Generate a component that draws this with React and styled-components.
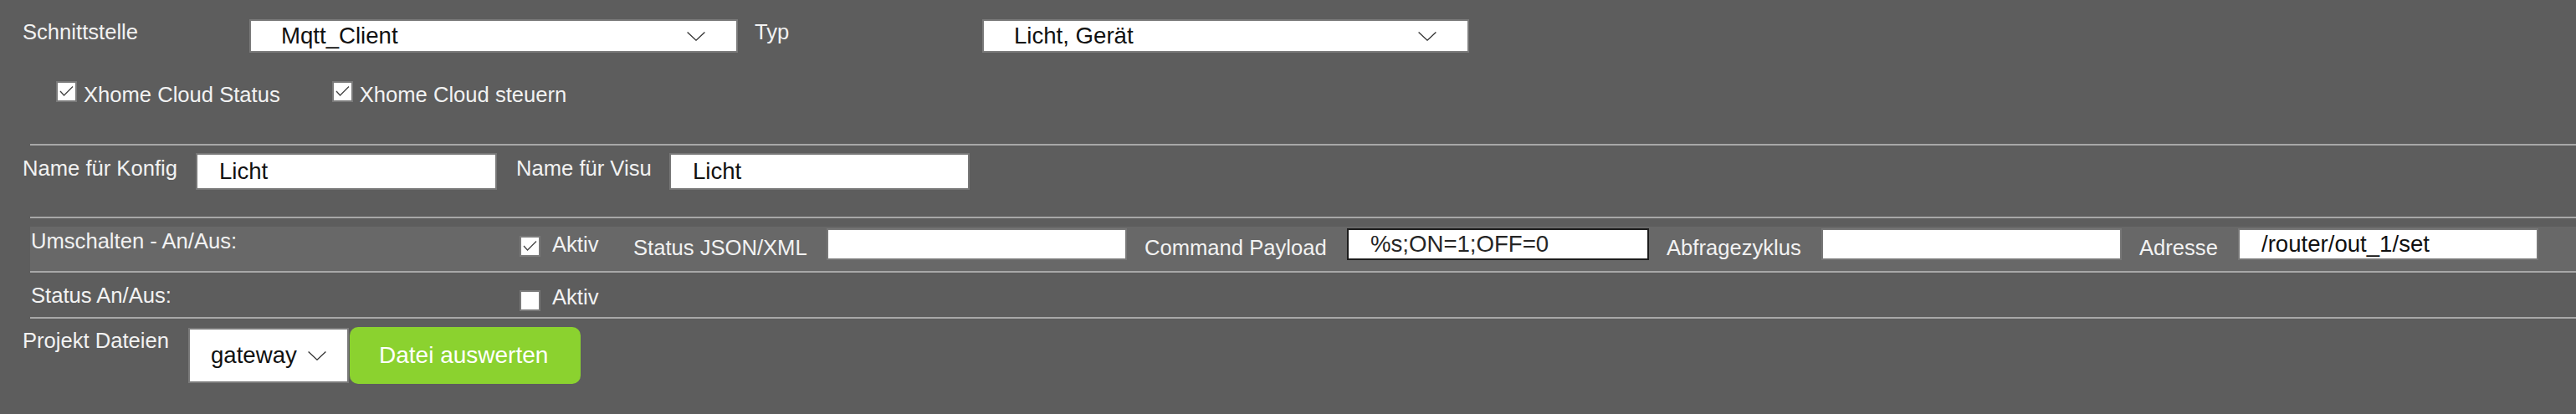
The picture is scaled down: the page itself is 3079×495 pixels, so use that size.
import React from 'react';
import styled, { createGlobalStyle } from 'styled-components';

const GlobalStyle = createGlobalStyle`
  html, body {
    margin: 0;
    padding: 0;
    background: #5d5d5d;
  }
  body {
    font-family: "Liberation Sans", Arial, sans-serif;
    color: #f2f2f2;
  }
`;

const Page = styled.div`
  width: 3079px;
  min-height: 495px;
  box-sizing: border-box;
  padding-top: 23px;
  overflow: hidden;
`;

const TopRow = styled.div`
  display: flex;
  align-items: flex-start;
  padding-left: 27px;
`;

const Label = styled.div`
  flex-shrink: 0;
  width: ${(p) => p.$w}px;
  margin-top: ${(p) => p.$mt || 0}px;
  margin-left: ${(p) => p.$ml || 0}px;
  font-size: 25.6px;
  line-height: 30px;
  white-space: nowrap;
`;

const Select = styled.div`
  flex-shrink: 0;
  display: flex;
  align-items: center;
  box-sizing: border-box;
  width: ${(p) => p.$w}px;
  height: ${(p) => p.$h || 40}px;
  margin-top: ${(p) => p.$mt || 0}px;
  padding-left: ${(p) => p.$pl || 36}px;
  padding-right: 37px;
  background: #fff;
  border: 2px solid #7a7a7a;
  color: #111;
  font-size: 27.6px;
  white-space: nowrap;
`;

const Chevron = styled.svg`
  flex-shrink: 0;
  margin-left: ${(p) => (p.$inline ? '13px' : 'auto')};
`;

const CheckRow = styled.div`
  display: flex;
  align-items: flex-start;
  gap: 62px;
  margin-top: 34px;
  padding-left: 67px;
`;

const CheckItem = styled.div`
  display: flex;
  align-items: flex-start;
`;

const Box = styled.div`
  flex-shrink: 0;
  width: 25px;
  height: 25px;
  box-sizing: border-box;
  margin-top: ${(p) => p.$mt || 0}px;
  border: 2px solid #7a7a7a;
  background: #fff;
`;

const CheckText = styled.span`
  margin-top: ${(p) => p.$mt || 1}px;
  margin-left: ${(p) => p.$ml || 8}px;
  font-size: 25.6px;
  line-height: 30px;
  white-space: nowrap;
`;

const Divider = styled.div`
  height: 2px;
  margin-left: 36px;
  margin-top: ${(p) => p.$mt}px;
  background: #a8a8a8;
`;

const NameRow = styled.div`
  display: flex;
  align-items: flex-start;
  margin-top: 9px;
  padding-left: 27px;
`;

const TextBox = styled.div`
  flex-shrink: 0;
  display: flex;
  align-items: center;
  box-sizing: border-box;
  width: ${(p) => p.$w}px;
  height: ${(p) => p.$h}px;
  padding-left: ${(p) => p.$pl || 26}px;
  background: #fff;
  border: 2px solid ${(p) => (p.$focus ? '#1c1c1c' : '#777')};
  color: ${(p) => (p.$focus ? '#262626' : '#111')};
  font-size: 27.6px;
  white-space: nowrap;
`;

const Table = styled.div`
  margin-top: 10px;
  margin-left: 36px;
`;

const TableRow = styled.div`
  display: flex;
  align-items: flex-start;
  box-sizing: border-box;
  height: 55px;
  padding-top: ${(p) => p.$pt}px;
  padding-left: 1px;
  background: ${(p) => (p.$band ? '#686868' : 'transparent')};
  border-bottom: 2px solid #a8a8a8;
`;

const RowTitle = styled.div`
  flex-shrink: 0;
  width: 584px;
  font-size: 25.6px;
  line-height: 30px;
  white-space: nowrap;
`;

const ActiveCell = styled.div`
  flex-shrink: 0;
  display: flex;
  align-items: flex-start;
  width: 136px;
`;

const Field = styled.div`
  flex-shrink: 0;
  display: flex;
  align-items: flex-start;
  margin-right: 21px;
`;

const FieldLabel = styled.div`
  flex-shrink: 0;
  width: ${(p) => p.$w}px;
  margin-top: 8px;
  font-size: 25.6px;
  line-height: 30px;
  white-space: nowrap;
`;

const ProjectRow = styled.div`
  display: flex;
  align-items: flex-start;
  margin-top: 10px;
  padding-left: 27px;
`;

const Button = styled.button`
  flex-shrink: 0;
  display: flex;
  align-items: center;
  width: 276px;
  height: 68px;
  margin-left: 1px;
  padding: 0 0 0 35px;
  border: none;
  border-radius: 10px;
  background: #8bd22f;
  color: #fff;
  font-family: "Liberation Sans", Arial, sans-serif;
  font-size: 28px;
  white-space: nowrap;
`;

const ChevronIcon = ({ inline }) => (
  <Chevron $inline={inline} width="22" height="11" viewBox="0 0 22 11">
    <polyline points="0.6,0.6 11,10.2 21.4,0.6" fill="none" stroke="#333" strokeWidth="1.3" />
  </Chevron>
);

const Checkbox = ({ checked, mt }) => (
  <Box $mt={mt}>
    {checked && (
      <svg width="21" height="21" viewBox="0 0 21 21">
        <polyline points="3,10 7.5,15 18,4.5" fill="none" stroke="#444" strokeWidth="1.3" />
      </svg>
    )}
  </Box>
);

const fields = [
  { label: 'Status JSON/XML', w: 231, input: 359, value: '' },
  { label: 'Command Payload', w: 242, input: 361, value: '%s;ON=1;OFF=0', focus: true },
  { label: 'Abfragezyklus', w: 185, input: 359, value: '' },
  { label: 'Adresse', w: 118, input: 359, value: '/router/out_1/set' },
];

const App = () => (
  <>
    <GlobalStyle />
    <Page>
      <TopRow>
        <Label $w={271}>Schnittstelle</Label>
        <Select $w={584}>
          Mqtt_Client
          <ChevronIcon />
        </Select>
        <Label $w={272} $ml={20}>Typ</Label>
        <Select $w={582} $pl={36}>
          Licht, Gerät
          <ChevronIcon />
        </Select>
      </TopRow>

      <CheckRow>
        <CheckItem>
          <Checkbox checked />
          <CheckText>Xhome Cloud Status</CheckText>
        </CheckItem>
        <CheckItem>
          <Checkbox checked />
          <CheckText>Xhome Cloud steuern</CheckText>
        </CheckItem>
      </CheckRow>

      <Divider $mt={44} />

      <NameRow>
        <Label $w={207} $mt={3}>Name für Konfig</Label>
        <TextBox $w={360} $h={44}>Licht</TextBox>
        <Label $w={183} $ml={23} $mt={3}>Name für Visu</Label>
        <TextBox $w={359} $h={44}>Licht</TextBox>
      </NameRow>

      <Divider $mt={32} />

      <Table>
        <TableRow $band $pt={2}>
          <RowTitle>Umschalten - An/Aus:</RowTitle>
          <ActiveCell>
            <Checkbox checked mt={9} />
            <CheckText $mt={4} $ml={14}>Aktiv</CheckText>
          </ActiveCell>
          {fields.map((f) => (
            <Field key={f.label}>
              <FieldLabel $w={f.w}>{f.label}</FieldLabel>
              <TextBox $w={f.input} $h={38} $focus={f.focus}>{f.value}</TextBox>
            </Field>
          ))}
        </TableRow>
        <TableRow $pt={12}>
          <RowTitle>Status An/Aus:</RowTitle>
          <ActiveCell>
            <Checkbox mt={9} />
            <CheckText $mt={2} $ml={14}>Aktiv</CheckText>
          </ActiveCell>
        </TableRow>
      </Table>

      <ProjectRow>
        <Label $w={198} $mt={1}>Projekt Dateien</Label>
        <Select $w={192} $h={66} $mt={1} $pl={25}>
          gateway
          <ChevronIcon inline />
        </Select>
        <Button>Datei auswerten</Button>
      </ProjectRow>
    </Page>
  </>
);

export default App;
